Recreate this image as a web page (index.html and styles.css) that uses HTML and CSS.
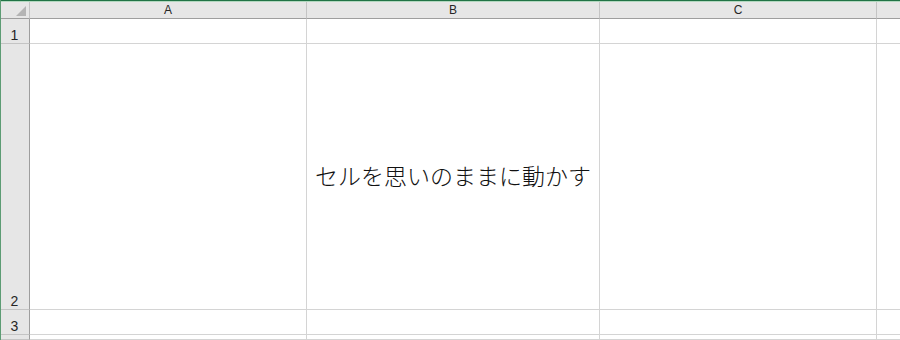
FILE: index.html
```html
<!doctype html>
<html lang="ja">
  <head>
    <meta charset="UTF-8" />
    <title>Sheet</title>
    <link rel="stylesheet" href="styles.css">
  </head>
  <body>
    <div class="window">
      <div class="topline"></div>
      <div class="sheet">
        <div class="corner"><span class="corner-tri"></span></div>
        <div class="col-head">A</div>
        <div class="col-head">B</div>
        <div class="col-head">C</div>
        <div class="col-head col-rest"></div>

        <div class="row-head">1</div>
        <div class="cell"></div>
        <div class="cell"></div>
        <div class="cell"></div>
        <div class="cell cell-rest"></div>

        <div class="row-head">2</div>
        <div class="cell"></div>
        <div class="cell cell-text">セルを思いのままに動かす</div>
        <div class="cell"></div>
        <div class="cell cell-rest"></div>

        <div class="row-head">3</div>
        <div class="cell"></div>
        <div class="cell"></div>
        <div class="cell"></div>
        <div class="cell cell-rest"></div>

        <div class="row-head"></div>
        <div class="cell"></div>
        <div class="cell"></div>
        <div class="cell"></div>
        <div class="cell cell-rest"></div>
      </div>
    </div>
  </body>
</html>
```

FILE: styles.css
```css
:root {
  --header-bg: #e6e6e6;
  --grid-line: #d4d4d4;
  --header-line: #9e9e9e;
  --header-sep: #c4c4c4;
  --excel-green: #217346;
}

* {
  box-sizing: border-box;
}

body {
  margin: 0;
  width: 900px;
  height: 340px;
  overflow: hidden;
  background: #fff;
  font-family: "Liberation Sans", Arial, sans-serif;
}

.window {
  height: 340px;
  border-left: 1px solid #5d9c74;
  overflow: hidden;
}

.topline {
  height: 2px;
  background: linear-gradient(var(--excel-green) 50%, #b3d8bf 50%);
}

.sheet {
  display: grid;
  grid-template-columns: 29px 277px 293px 277px 1fr;
  grid-template-rows: 17px 25px 266px 25px 1fr;
  height: 338px;
}

.corner {
  background: var(--header-bg);
  border-right: 1px solid var(--header-sep);
  border-bottom: 1px solid var(--header-line);
  position: relative;
}

.corner-tri {
  position: absolute;
  right: 3px;
  bottom: 2px;
  width: 0;
  height: 0;
  border-left: 10px solid transparent;
  border-bottom: 10px solid #b4b4b4;
}

.col-head {
  background: var(--header-bg);
  border-right: 1px solid var(--header-sep);
  border-bottom: 1px solid var(--header-line);
  color: #262626;
  font-size: 12px;
  line-height: 15px;
  padding-top: 1px;
  text-align: center;
}

.col-rest {
  border-right: none;
}

.row-head {
  background: var(--header-bg);
  border-right: 1px solid var(--header-line);
  border-bottom: 1px solid var(--header-sep);
  color: #262626;
  font-size: 14px;
  line-height: 14px;
  display: flex;
  align-items: flex-end;
  justify-content: center;
  padding-right: 1px;
  padding-bottom: 1px;
}

.cell {
  border-right: 1px solid var(--grid-line);
  border-bottom: 1px solid var(--grid-line);
}

.cell-rest {
  border-right: none;
}

.cell-text {
  display: flex;
  align-items: center;
  justify-content: center;
  font-family: "Noto Sans CJK JP", "Noto Sans", sans-serif;
  font-size: 23px;
  font-weight: 300;
  color: #111;
  padding-bottom: 3px;
}
```
